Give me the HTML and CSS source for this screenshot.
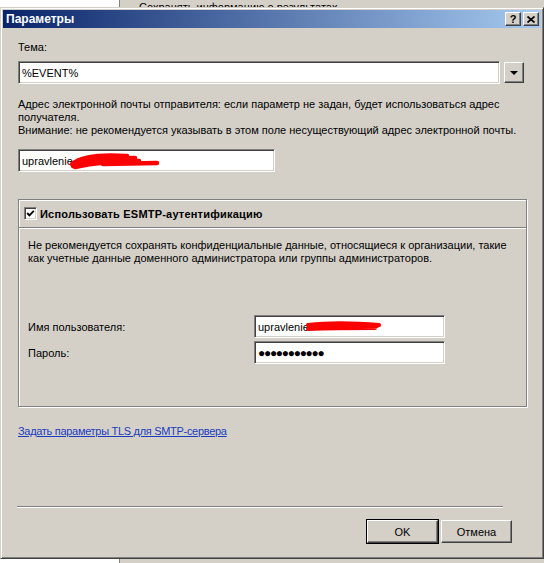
FILE: index.html
```html
<!DOCTYPE html>
<html lang="ru">
<head>
    <meta charset="UTF-8">
    <meta name="viewport" content="width=device-width, initial-scale=1.0">
    <title>Параметры</title>
    <link rel="stylesheet" href="styles.css">
</head>
<body>
    <!-- окно позади диалога -->
    <div class="desk">
        <div class="desk-left"></div>
        <div class="desk-right">
            <div class="back-group"><span>Сохранять информацию о результатах</span></div>
        </div>
    </div>

    <div class="dialog">
        <div class="titlebar">
            <span class="title">Параметры</span>
            <div class="title-buttons">
                <span class="tbtn tbtn-help">?</span>
                <span class="tbtn">
                    <svg width="8" height="7" viewBox="0 0 8 7"><path d="M0.5 0.5 L7.5 6.5 M7.5 0.5 L0.5 6.5" stroke="#000" stroke-width="1.7" fill="none"/></svg>
                </span>
            </div>
        </div>

        <div class="content">
            <div class="lbl-subject">Тема:</div>
            <div class="combo-row">
                <div class="field combo-input">%EVENT%</div>
                <div class="raised combo-btn"><span class="arrow"></span></div>
            </div>

            <p class="hint">Адрес электронной почты отправителя: если параметр не задан, будет использоваться адрес<br>получателя.<br>Внимание: не рекомендуется указывать в этом поле несуществующий адрес электронной почты.</p>

            <div class="field email-input">
                <span>upravlenie</span>
                <svg class="scribble" width="92" height="18" viewBox="0 0 92 18">
                    <path d="M3 12 C12 5, 30 2, 58 4 M4 14 C20 8, 40 6, 66 6 M6 15 C24 11, 44 9, 70 9 M8 11 L60 10 M34 12 L88 11" stroke="#f00" stroke-width="4.5" fill="none" stroke-linecap="round"/>
                </svg>
            </div>

            <div class="groupbox">
                <div class="group-head">
                    <span class="checkbox">
                        <svg width="9" height="9" viewBox="0 0 9 9"><polyline points="1.2,4 3.4,6.3 7.8,1.8" stroke="#000" stroke-width="1.9" fill="none"/></svg>
                    </span>
                    <span class="group-title">Использовать ESMTP-аутентификацию</span>
                </div>
                <div class="group-body">
                    <p class="warn">Не рекомендуется сохранять конфиденциальные данные, относящиеся к организации, такие<br>как учетные данные доменного администратора или группы администраторов.</p>
                    <div class="form-row">
                        <span class="row-label">Имя пользователя:</span>
                        <div class="field user-input">
                            <span>upravlenie</span>
                            <svg class="scribble" width="80" height="14" viewBox="0 0 80 14">
                                <path d="M3 5 C20 3, 50 3, 74 5 M3 9 C30 8, 50 8, 70 8 M4 7 L72 6" stroke="#f00" stroke-width="4" fill="none" stroke-linecap="round"/>
                            </svg>
                        </div>
                    </div>
                    <div class="form-row">
                        <span class="row-label">Пароль:</span>
                        <div class="field user-input"><span class="dots">●●●●●●●●●●●</span></div>
                    </div>
                </div>
            </div>

            <a class="tls-link" href="#">Задать параметры TLS для SMTP-сервера</a>

            <div class="separator"></div>

            <div class="buttons">
                <span class="raised btn btn-default">OK</span>
                <span class="raised btn">Отмена</span>
            </div>
        </div>
    </div>
</body>
</html>
```

FILE: styles.css
```css
* {
    box-sizing: border-box;
}
body {
    margin: 0;
    width: 544px;
    height: 563px;
    overflow: hidden;
    position: relative;
    font-family: "Liberation Sans", Arial, sans-serif;
    font-size: 11px;
    color: #000;
}
p {
    margin: 0;
}

/* фон */
.desk {
    display: flex;
    height: 563px;
}
.desk-left {
    width: 120px;
    background: #fff;
    border-right: 1px solid #808080;
}
.desk-right {
    flex: 1;
    background: #d4d0c8;
    padding: 1px 0 0 10px;
}
.back-group {
    display: flex;
    align-items: center;
    gap: 3px;
    color: #000;
}
.back-group::before,
.back-group::after {
    content: "";
    border-top: 1px solid #808080;
    width: 6px;
}
.back-group::after {
    width: 40px;
}

/* диалог */
.dialog {
    position: absolute;
    left: 0;
    top: 7px;
    width: 544px;
    height: 552px;
    background: #d4d0c8;
    border: 1px solid;
    border-color: #d4d0c8 #404040 #404040 #d4d0c8;
    box-shadow: inset 1px 1px #fff, inset -1px -1px #808080;
    padding: 2px;
    display: flex;
    flex-direction: column;
}
.titlebar {
    height: 18px;
    background: linear-gradient(to right, #0a246a, #a6caf0);
    display: flex;
    align-items: center;
    justify-content: space-between;
    padding: 0 2px 0 3px;
}
.title {
    color: #fff;
    font-weight: bold;
    font-size: 12px;
}
.title-buttons {
    display: flex;
    gap: 2px;
}
.tbtn {
    width: 16px;
    height: 14px;
    background: #d4d0c8;
    border: 1px solid;
    border-color: #fff #404040 #404040 #fff;
    box-shadow: inset -1px -1px #808080;
    display: flex;
    align-items: center;
    justify-content: center;
    font-weight: bold;
    font-size: 11px;
    line-height: 1;
}

.content {
    display: flex;
    flex-direction: column;
    padding: 0 0 0 15px;
}
.lbl-subject {
    margin-top: 13px;
    line-height: 13px;
}

/* поля ввода */
.field {
    background: #fff;
    border: 1px solid;
    border-color: #808080 #fff #fff #808080;
    box-shadow: inset 1px 1px #404040, inset -1px -1px #d4d0c8;
    display: flex;
    align-items: center;
    padding: 0 3px;
    height: 23px;
    position: relative;
    white-space: nowrap;
}
.raised {
    background: #d4d0c8;
    border: 1px solid;
    border-color: #fff #404040 #404040 #fff;
    box-shadow: inset -1px -1px #808080;
}
.combo-row {
    display: flex;
    align-items: center;
    margin-top: 7px;
}
.combo-input {
    width: 482px;
}
.combo-btn {
    width: 20px;
    height: 21px;
    margin-left: 4px;
    display: flex;
    align-items: center;
    justify-content: center;
}
.arrow {
    width: 0;
    height: 0;
    border-left: 4px solid transparent;
    border-right: 4px solid transparent;
    border-top: 4px solid #000;
    margin-top: 1px;
}
.hint {
    margin-top: 14px;
    line-height: 13px;
    white-space: nowrap;
}
.email-input {
    margin-top: 12px;
    width: 257px;
}
.scribble {
    margin-left: -4px;
}

/* группа */
.groupbox {
    margin-top: 27px;
    width: 509px;
    height: 208px;
    border: 1px solid #808080;
    box-shadow: inset 1px 1px #fff, 1px 1px #fff;
}
.group-head {
    height: 28px;
    display: flex;
    align-items: center;
    padding-left: 5px;
    gap: 3px;
    border-bottom: 1px solid #808080;
    box-shadow: 0 1px #fff;
}
.checkbox {
    width: 13px;
    height: 13px;
    background: #fff;
    border: 1px solid;
    border-color: #808080 #fff #fff #808080;
    box-shadow: inset 1px 1px #404040, inset -1px -1px #d4d0c8;
    display: flex;
    align-items: center;
    justify-content: center;
}
.group-title {
    font-weight: bold;
    font-size: 11px;
    letter-spacing: 0.2px;
}
.group-body {
    padding: 11px 9px 0 9px;
    display: flex;
    flex-direction: column;
}
.warn {
    line-height: 13px;
    white-space: nowrap;
}
.form-row {
    display: flex;
    align-items: center;
    margin-top: 3px;
}
.warn + .form-row {
    margin-top: 50px;
}
.row-label {
    width: 226px;
}
.user-input {
    width: 191px;
}
.dots {
    font-size: 12px;
    letter-spacing: -1.3px;
}

.tls-link {
    margin-top: 18px;
    line-height: 13px;
    color: #1a3dbf;
    text-decoration: underline;
    align-self: flex-start;
    letter-spacing: -0.3px;
}
.separator {
    margin-top: 68px;
    width: 486px;
    margin-left: -1px;
    border-top: 1px solid #808080;
    border-bottom: 1px solid #fff;
}
.buttons {
    display: flex;
    gap: 3px;
    margin: 12px 0 0 349px;
}
.btn {
    width: 71px;
    height: 23px;
    display: flex;
    align-items: center;
    justify-content: center;
}
.btn-default {
    outline: 1px solid #000;
    outline-offset: 0;
}
```
